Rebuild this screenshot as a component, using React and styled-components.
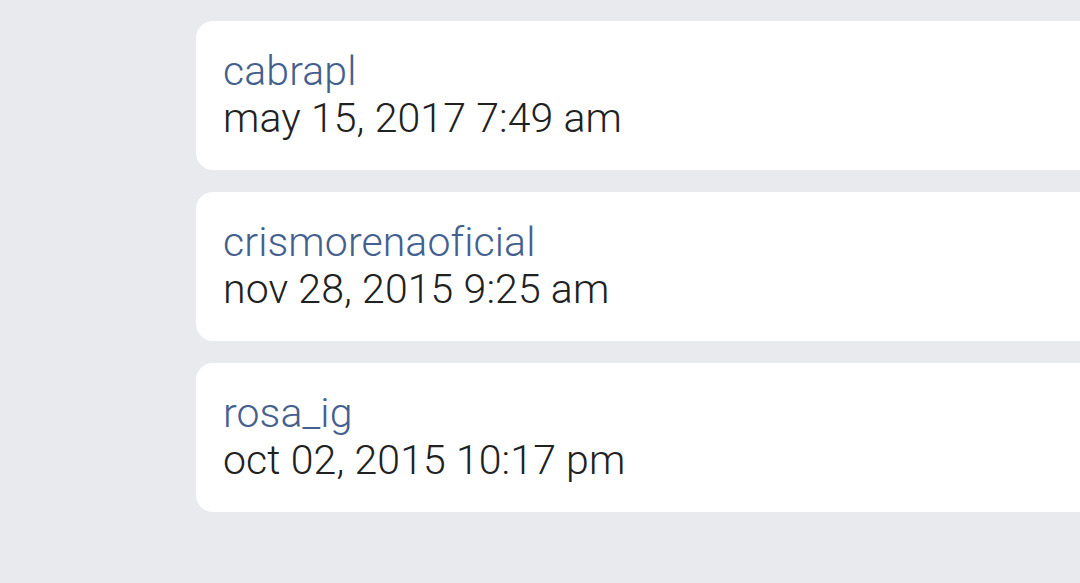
import React from "react";
import styled, { createGlobalStyle } from "styled-components";

const GlobalStyle = createGlobalStyle`
    html, body {
        margin: 0;
        padding: 0;
        background: #e9eaee;
        font-family: Roboto, "Noto Sans", sans-serif;
    }
`

const entries = [
    { user: "cabrapl", date: "may 15, 2017 7:49 am" },
    { user: "crismorenaoficial", date: "nov 28, 2015 9:25 am" },
    { user: "rosa_ig", date: "oct 02, 2015 10:17 pm" },
];

const App = () => {
    return (
        <>
            <GlobalStyle />
            <Page>
                <List>
                    {
                        entries.map((e, i) =>
                            <Card key={i}>
                                <UserName>{e.user}</UserName>
                                <DateText>{e.date}</DateText>
                            </Card>
                        )
                    }
                </List>
            </Page>
        </>
    )
}

export default App


const Page = styled.div`
    width: 1080px;
    height: 583px;
    overflow: hidden;
    background: #e9eaee;
`

const List = styled.div`
    display: flex;
    flex-direction: column;
    gap: 22px;
    padding: 21px 0 0 196px;
`

const Card = styled.div`
    width: 920px;
    height: 149px;
    box-sizing: border-box;
    padding: 27px 0 0 27px;
    background: #ffffff;
    border-radius: 17px 0 0 17px;
    display: flex;
    flex-direction: column;
`

const UserName = styled.div`
    font-size: 41px;
    font-weight: 300;
    line-height: 47px;
    letter-spacing: 0.1px;
    color: #44608e;
`

const DateText = styled.div`
    font-size: 41px;
    font-weight: 300;
    line-height: 47px;
    letter-spacing: 0.1px;
    color: #212121;
`
